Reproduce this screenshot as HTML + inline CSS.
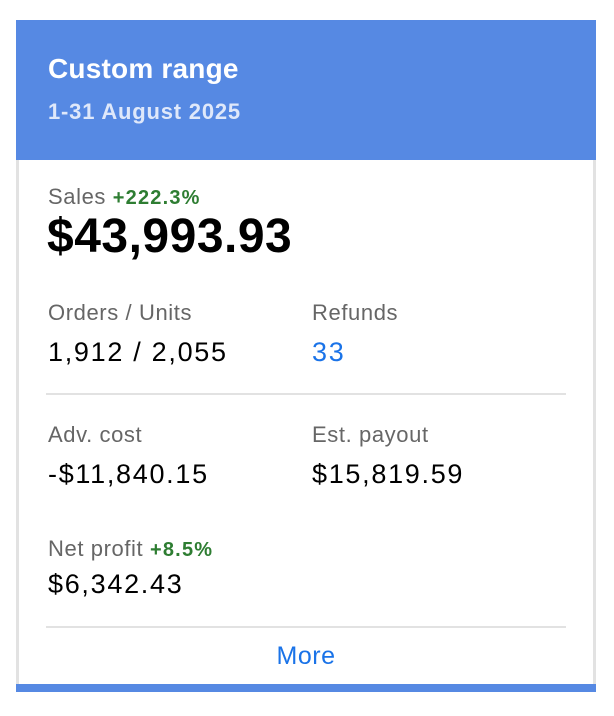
<!DOCTYPE html>
<html><head><style>
body{margin:0;background:#fff;font-family:"Liberation Sans",sans-serif;}
.card{position:absolute;left:16px;top:20px;width:580px;height:672px;}
.hdr{position:absolute;left:0;top:0;width:580px;height:140px;background:#5689e3;}
.t1{position:absolute;left:32px;top:33px;color:#fff;font-size:28px;font-weight:bold;letter-spacing:0.2px;}
.t2{position:absolute;left:32px;top:79px;color:#dfe8fa;font-size:22px;font-weight:bold;letter-spacing:0.8px;}
.body{position:absolute;left:0;top:140px;width:574px;height:524px;border-left:3px solid #e2e2e2;border-right:3px solid #e2e2e2;}
.foot{position:absolute;left:0;top:664px;width:580px;height:8px;background:#5689e3;}
.a{position:absolute;white-space:nowrap;}
.lbl{color:#666;font-size:22px;letter-spacing:0.6px;}
.val{color:#000;font-size:27px;letter-spacing:1.7px;}
.g{color:#2e7d32;font-weight:bold;font-size:20px;letter-spacing:1.2px;}
.hr{position:absolute;left:30px;width:520px;height:2px;background:#e2e2e2;}
</style></head><body>
<div class="card">
<div class="hdr"><div class="t1">Custom range</div><div class="t2">1-31 August 2025</div></div>
<div class="body"></div>
<div class="foot"></div>
<div class="a lbl" style="left:32px;top:164px">Sales <span class="g">+222.3%</span></div>
<div class="a" style="left:31px;top:189px;font-size:48px;font-weight:bold;color:#000;letter-spacing:0.5px">$43,993.93</div>
<div class="a lbl" style="left:32px;top:280px">Orders / Units</div>
<div class="a val" style="left:32px;top:317px">1,912 / 2,055</div>
<div class="a lbl" style="left:296px;top:280px">Refunds</div>
<div class="a val" style="left:296px;top:317px;color:#1a73e8">33</div>
<div class="hr" style="top:373px"></div>
<div class="a lbl" style="left:32px;top:402px">Adv. cost</div>
<div class="a val" style="left:32px;top:439px">-$11,840.15</div>
<div class="a lbl" style="left:296px;top:402px">Est. payout</div>
<div class="a val" style="left:296px;top:439px">$15,819.59</div>
<div class="a lbl" style="left:32px;top:516px">Net profit <span class="g">+8.5%</span></div>
<div class="a val" style="left:32px;top:549px">$6,342.43</div>
<div class="hr" style="top:606px"></div>
<div class="a" style="left:0;width:580px;text-align:center;top:622px;font-size:25px;color:#1a73e8;letter-spacing:0.5px">More</div>
</div>
</body></html>
